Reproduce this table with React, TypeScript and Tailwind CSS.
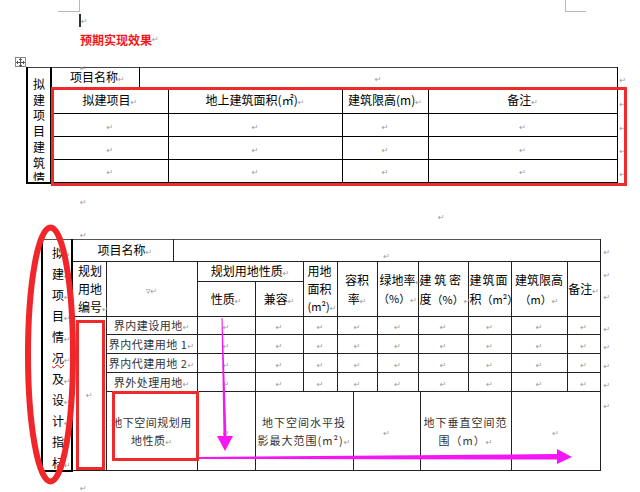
import React from "react";

// Word paragraph mark
const Ret = ({ className = "" }: { className?: string }) => (
  <span className={`font-['DejaVu_Sans',sans-serif] text-[8px] leading-none text-[#9a9a9a] ${className}`}>↵</span>
);

const c1 = "border border-black p-0 text-center align-middle";
const c2 = "border border-[#222] p-0 text-center align-middle";
const fang = "text-[11px] tracking-[0.5px] text-[#333]";

function TableOne() {
  const leftChars = ["拟", "建", "项", "目", "建", "筑", "情"];
  return (
    <table className="w-[604px] table-fixed border-collapse text-[12px] leading-none">
      <colgroup>
        <col className="w-[24px]" />
        <col className="w-[88px]" />
        <col className="w-[29px]" />
        <col className="w-[174px]" />
        <col className="w-[86px]" />
        <col className="w-[189px]" />
        <col className="w-[14px]" />
      </colgroup>
      <tbody>
        <tr className="h-[20px]">
          <td rowSpan={5} className="border-2 border-t border-t-[#444] border-black p-0 align-top">
            <div className="flex h-[113px] flex-col items-center overflow-hidden pt-[8px] text-[12px] leading-[15.7px]">
              {leftChars.map((c, i) => (
                <span key={i}>{c}</span>
              ))}
            </div>
          </td>
          <td className={`${c1} border-t-[#444] pl-[4px]`}>
            项目名称<Ret />
          </td>
          <td colSpan={4} className={`${c1} border-t-[#444]`}>
            <Ret />
          </td>
          <td className="p-0 pl-[2px] align-top pt-[4px]">
            <Ret />
          </td>
        </tr>
        <tr className="h-[26px]">
          <td colSpan={2} className={c1}>
            拟建项目<Ret />
          </td>
          <td className={c1}>
            地上建筑面积(㎡)<Ret />
          </td>
          <td className={c1}>
            建筑限高(m)<Ret />
          </td>
          <td className={c1}>
            备注<Ret />
          </td>
          <td className="p-0 pl-[2px] align-top pt-[8px]">
            <Ret />
          </td>
        </tr>
        {[0, 1, 2].map((r) => (
          <tr key={r} className="h-[23px]">
            <td colSpan={2} className={`${c1} ${r === 2 ? "border-b-2" : ""}`}>
              <Ret />
            </td>
            <td className={`${c1} ${r === 2 ? "border-b-2" : ""}`}>
              <Ret />
            </td>
            <td className={`${c1} ${r === 2 ? "border-b-2" : ""}`}>
              <Ret />
            </td>
            <td className={`${c1} ${r === 2 ? "border-b-2" : ""}`}>
              <Ret />
            </td>
            <td className="p-0 pl-[2px] align-top pt-[6px]">
              <Ret />
            </td>
          </tr>
        ))}
      </tbody>
    </table>
  );
}

function TableTwo() {
  const leftChars = ["拟", "建", "项", "目", "情", "况", "及", "设", "计", "指", "标"];
  const rows = ["界内建设用地", "界内代建用地 1", "界内代建用地 2", "界外处理用地"];
  const mark = (pt: string) => (
    <td className={`p-0 pl-[3px] align-top ${pt}`}>
      <Ret />
    </td>
  );
  return (
    <table className="w-[570px] table-fixed border-collapse text-[12px] leading-none">
      <colgroup>
        <col className="w-[30px]" />
        <col className="w-[34px]" />
        <col className="w-[67px]" />
        <col className="w-[24px]" />
        <col className="w-[58px]" />
        <col className="w-[48px]" />
        <col className="w-[34px]" />
        <col className="w-[16px]" />
        <col className="w-[24px]" />
        <col className="w-[41px]" />
        <col className="w-[2px]" />
        <col className="w-[48px]" />
        <col className="w-[43px]" />
        <col className="w-[56px]" />
        <col className="w-[33px]" />
        <col className="w-[12px]" />
      </colgroup>
      <tbody>
        <tr className="h-[22px]">
          <td rowSpan={8} className="border-2 border-t border-t-[#555] border-black p-0 align-top">
            <div className="flex h-[229px] flex-col pl-[9px] pt-[2px] text-[12px] leading-[21px]">
              {leftChars.map((c, i) => (
                <span key={i} className="whitespace-nowrap">
                  <span className={c === "况" ? "underline decoration-wavy decoration-red-600 decoration-1" : ""}>{c}</span>
                  <Ret />
                </span>
              ))}
            </div>
          </td>
          <td colSpan={2} className={`${c2} border-t-[#555] pl-[4px]`}>
            项目名称<Ret />
          </td>
          <td colSpan={12} className={`${c2} border-t-[#555] align-top pt-[8px]`}>
            <Ret />
          </td>
          {mark("pt-[4px]")}
        </tr>
        <tr className="h-[20px]">
          <td rowSpan={2} className={`${c2} whitespace-nowrap text-left pl-[5px] leading-[18px]`}>
            规划
            <br />
            用地
            <br />
            编号<Ret />
          </td>
          <td colSpan={2} rowSpan={2} className={c2}>
            <span className="text-[9px] text-[#888]">▿</span>
            <Ret />
          </td>
          <td colSpan={2} className={`${c2} whitespace-nowrap`}>
            规划用地性质<Ret />
          </td>
          <td rowSpan={2} className={`${c2} whitespace-nowrap text-left pl-[4px] leading-[17.5px]`}>
            用地
            <br />
            面积
            <br />
            <span className="text-[11px]">(m²)</span>
            <Ret />
          </td>
          <td colSpan={2} rowSpan={2} className={`${c2} leading-[19px]`}>
            容积
            <br />
            率<Ret />
          </td>
          <td rowSpan={2} className={`${c2} leading-[19px]`}>
            <div className="text-left pl-[2px] whitespace-nowrap">
              绿地率<Ret />
            </div>
            <div className="text-[11px] whitespace-nowrap">
              （%）<Ret />
            </div>
          </td>
          <td colSpan={2} rowSpan={2} className={`${c2} text-left pl-[1px] leading-[19px]`}>
            <div className="whitespace-nowrap">建 筑 密</div>
            <div className="whitespace-nowrap">
              度<span className="text-[11px]">（%）</span>
              <Ret />
            </div>
          </td>
          <td rowSpan={2} className={`${c2} text-left pl-[1px] leading-[19px]`}>
            <div className="whitespace-nowrap tracking-[1px]">建筑面</div>
            <div className="whitespace-nowrap">
              积<span className="text-[11px]">（m²）</span>
            </div>
          </td>
          <td rowSpan={2} className={`${c2} whitespace-nowrap leading-[19px]`}>
            建筑限高
            <br />
            <span className="text-[11px]">（m）</span>
            <Ret />
          </td>
          <td rowSpan={2} className={`${c2} whitespace-nowrap`}>
            备注<Ret />
          </td>
          {mark("pt-[5px]")}
        </tr>
        <tr className="h-[35px]">
          <td className={c2}>
            性质<Ret />
          </td>
          <td className={c2}>
            兼容<Ret />
          </td>
          {mark("pt-[7px]")}
        </tr>
        {rows.map((label, i) => (
          <tr key={i} className={i === 0 ? "h-[18px]" : "h-[19px]"}>
            {i === 0 && (
              <td rowSpan={5} className={c2}>
                <Ret />
              </td>
            )}
            <td colSpan={2} className={`${c2} whitespace-nowrap`}>
              <span className={fang}>{label}</span>
              <Ret />
            </td>
            <td className={c2}>
              <Ret />
            </td>
            <td className={c2}>
              <Ret />
            </td>
            <td className={c2}>
              <Ret />
            </td>
            <td colSpan={2} className={c2}>
              <Ret />
            </td>
            <td className={c2}>
              <Ret />
            </td>
            <td colSpan={2} className={c2}>
              <Ret />
            </td>
            <td className={c2}>
              <Ret />
            </td>
            <td className={c2}>
              <Ret />
            </td>
            <td className={c2}>
              <Ret />
            </td>
            {mark("pt-[4px]")}
          </tr>
        ))}
        <tr className="h-[79px]">
          <td colSpan={2} className={`${c2} leading-[18px]`}>
            <span className="text-[11px] tracking-[0.5px] text-[#333]">
              地下空间规划用
              <br />
              地性质
            </span>
            <Ret />
          </td>
          <td className={c2}>
            <Ret />
          </td>
          <td colSpan={3} className={`${c2} leading-[18px]`}>
            <span className="text-[11px] tracking-[1px] text-[#333]">
              地下空间水平投
              <br />
              影最大范围(m²)
            </span>
            <Ret />
          </td>
          <td colSpan={3} className={c2}>
            <Ret />
          </td>
          <td colSpan={2} className={`${c2} leading-[18px]`}>
            <span className="text-[11px] tracking-[1px] text-[#333]">
              地下垂直空间范
              <br />
              围（m）
            </span>
            <Ret />
          </td>
          <td colSpan={2} className={c2}>
            <Ret />
          </td>
          {mark("pt-[6px]")}
        </tr>
      </tbody>
    </table>
  );
}

export default function App() {
  return (
    <div className="relative h-[492px] w-[640px] overflow-hidden bg-white font-['Noto_Sans_CJK_SC','DejaVu_Sans',sans-serif] text-black">
      {/* page corner marks */}
      <div className="absolute left-[58px] top-0 h-[12px] w-[22px] border-b border-r border-[#b8b8b8]" />
      <div className="absolute left-[565px] top-0 h-[12px] w-[21px] border-b border-l border-[#b8b8b8]" />

      <div className="flex h-[30px] items-start pl-[79px] pt-[14px]">
        <span className="h-[13px] w-[2px] bg-[#333]" />
        <Ret className="mt-[4px]" />
      </div>
      <div className="flex h-[20px] items-center pl-[80px]">
        <span className="text-[12px] font-bold text-[#f01818]">预期实现效果</span>
        <Ret />
      </div>
      <div className="relative h-[17px] pl-[80px] pt-[6px] leading-none">
        <div className="absolute left-[15px] top-[7px] flex h-[10px] w-[11px] items-center justify-center border border-[#888] bg-white">
          <svg width="9" height="9" viewBox="0 0 9 9" fill="none" stroke="#555" strokeWidth="1">
            <path d="M4.5 0.5v8M0.5 4.5h8" />
            <path d="M3 2l1.5-1.5L6 2M3 7l1.5 1.5L6 7M2 3L0.5 4.5 2 6M7 3l1.5 1.5L7 6" />
          </svg>
        </div>
        <Ret />
      </div>

      <div className="h-[117px] pl-[26px]">
        <TableOne />
      </div>

      <div className="h-[16px] pl-[80px] pt-[6px] leading-none">
        <Ret />
      </div>
      <div className="h-[18px] pl-[438px] pt-[5px] leading-none">
        <Ret />
      </div>
      <div className="h-[21px] pl-[80px] pt-[5px] leading-none">
        <Ret />
      </div>

      <div className="h-[233px] pl-[41px]">
        <TableTwo />
      </div>
      <div className="pl-[80px] pt-[4px] leading-none">
        <Ret />
      </div>

      {/* annotations */}
      <div className="absolute left-[51px] top-[87px] h-[99px] w-[576px] border-[3px] border-[#ee2a2a]" />
      <div className="absolute left-[76px] top-[320px] h-[150px] w-[29px] border-[3px] border-[#ee2a2a]" />
      <div className="absolute left-[112px] top-[391px] h-[70px] w-[87px] border-[3px] border-[#ee2a2a]" />
      <svg className="pointer-events-none absolute left-0 top-0" width="640" height="492" viewBox="0 0 640 492">
        <ellipse cx="50.5" cy="354.5" rx="22.5" ry="127" fill="none" stroke="#f0262a" strokeWidth="6" />
        <polygon points="221.5,318 222.5,318 226.5,437 223.5,437" fill="#f516f5" />
        <polygon points="217,436 233,436 225,451" fill="#f516f5" />
        <polygon points="199,457 199,459 558,459.5 558,454" fill="#f516f5" />
        <polygon points="557,449 557,464 572,457" fill="#f516f5" />
      </svg>
    </div>
  );
}
